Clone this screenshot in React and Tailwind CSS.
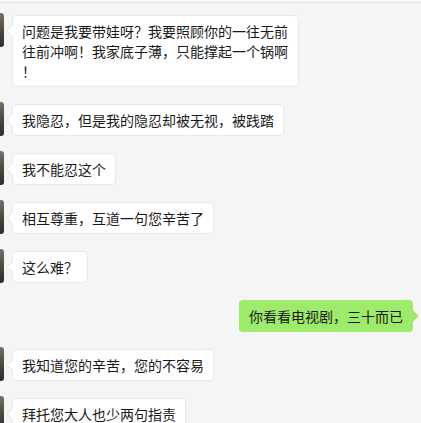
const messages = [
  { side: 'left', text: '问题是我要带娃呀？我要照顾你的一往无前往前冲啊！我家底子薄，只能撑起一个锅啊！' },
  { side: 'left', text: '我隐忍，但是我的隐忍却被无视，被践踏' },
  { side: 'left', text: '我不能忍这个' },
  { side: 'left', text: '相互尊重，互道一句您辛苦了' },
  { side: 'left', text: '这么难？' },
  { side: 'right', text: '你看看电视剧，三十而已' },
  { side: 'left', text: '我知道您的辛苦，您的不容易' },
  { side: 'left', text: '拜托您大人也少两句指责' },
]

function LeftRow({ text }) {
  return (
    <div className="flex items-start gap-[8px] ml-[-32px]">
      <div className="mt-[-2px] h-[34px] w-[36px] shrink-0 rounded-[3px] bg-gradient-to-b from-[#7a7166] via-[#4d4942] to-[#2f2d2a]" />
      <div className="relative max-w-[287px] rounded-[4px] border border-[#e8e8e8] bg-white px-[9px] py-[5px] text-[14px] leading-[20px] text-[#1a1a1a] [line-break:anywhere]">
        <div className="absolute left-[-5px] top-[11px] h-[8px] w-[8px] rotate-45 border-b border-l border-[#e8e8e8] bg-white" />
        <span className="relative">{text}</span>
      </div>
    </div>
  )
}

function RightRow({ text }) {
  return (
    <div className="flex justify-end pr-[8px]">
      <div className="relative max-w-[287px] rounded-[4px] bg-[#9eea6a] px-[10px] py-[6px] text-[14px] leading-[20px] text-[#1a1a1a]">
        <div className="absolute right-[-4px] top-[12px] h-[8px] w-[8px] rotate-45 bg-[#9eea6a]" />
        <span className="relative">{text}</span>
      </div>
    </div>
  )
}

export default function App() {
  return (
    <div
      className="h-[423px] w-[421px] overflow-hidden bg-[#f5f5f5]"
      style={{ fontFamily: '"Noto Sans CJK SC", "Noto Sans", sans-serif' }}
    >
      <div className="h-[3px] border-b border-[#e6e6e6] bg-[#f7f7f7]" />
      <div className="flex flex-col gap-[17px] pt-[12px]">
        {messages.map((m, i) =>
          m.side === 'left' ? <LeftRow key={i} text={m.text} /> : <RightRow key={i} text={m.text} />
        )}
      </div>
    </div>
  )
}
